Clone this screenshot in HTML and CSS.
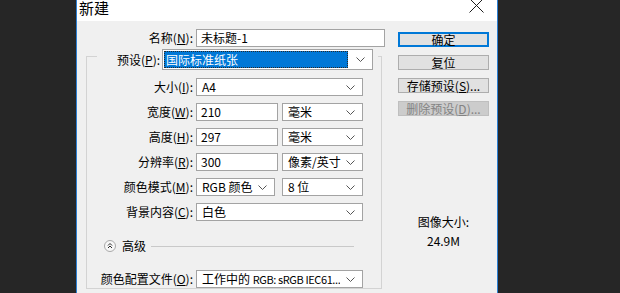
FILE: index.html
```html
<!DOCTYPE html>
<html lang="zh-CN">
<head>
  <meta charset="UTF-8" />
  <title>新建</title>
  <link rel="stylesheet" href="styles.css">
</head>
<body>

  <div class="dialog">

    <div class="titlebar">
      <span class="title">新建</span>
      <svg class="close" width="15" height="15" viewBox="0 0 15 15">
        <path d="M0.5 0.5 L14.5 14.5 M14.5 0.5 L0.5 14.5" stroke="#1e1e1e" stroke-width="1" fill="none"/>
      </svg>
    </div>

    <div class="dialog-body">

      <div class="form">
        <div class="row name-row">
          <label class="label">名称(<u>N</u>):</label>
          <div class="field name-field">未标题-1</div>
        </div>

        <fieldset class="group">
          <legend class="preset">
            <label class="label">预设(<u>P</u>):</label>
            <div class="field select preset-select">
              <span class="selected">国际标准纸张</span>
              <svg class="chev" width="9" height="5" viewBox="0 0 9 5"><path d="M0.5 0.5 L4.5 4.5 L8.5 0.5" fill="none" stroke="#555"/></svg>
            </div>
          </legend>

          <div class="rows">
            <div class="row">
              <label class="label">大小(<u>I</u>):</label>
              <div class="field select wide">
                <span>A4</span>
                <svg class="chev" width="9" height="5" viewBox="0 0 9 5"><path d="M0.5 0.5 L4.5 4.5 L8.5 0.5" fill="none" stroke="#555"/></svg>
              </div>
            </div>

            <div class="row">
              <label class="label">宽度(<u>W</u>):</label>
              <div class="field num">210</div>
              <div class="field select unit">
                <span>毫米</span>
                <svg class="chev" width="9" height="5" viewBox="0 0 9 5"><path d="M0.5 0.5 L4.5 4.5 L8.5 0.5" fill="none" stroke="#555"/></svg>
              </div>
            </div>

            <div class="row">
              <label class="label">高度(<u>H</u>):</label>
              <div class="field num">297</div>
              <div class="field select unit">
                <span>毫米</span>
                <svg class="chev" width="9" height="5" viewBox="0 0 9 5"><path d="M0.5 0.5 L4.5 4.5 L8.5 0.5" fill="none" stroke="#555"/></svg>
              </div>
            </div>

            <div class="row">
              <label class="label">分辨率(<u>R</u>):</label>
              <div class="field num">300</div>
              <div class="field select unit">
                <span>像素/英寸</span>
                <svg class="chev" width="9" height="5" viewBox="0 0 9 5"><path d="M0.5 0.5 L4.5 4.5 L8.5 0.5" fill="none" stroke="#555"/></svg>
              </div>
            </div>

            <div class="row">
              <label class="label">颜色模式(<u>M</u>):</label>
              <div class="field select mode">
                <span>RGB 颜色</span>
                <svg class="chev" width="9" height="5" viewBox="0 0 9 5"><path d="M0.5 0.5 L4.5 4.5 L8.5 0.5" fill="none" stroke="#555"/></svg>
              </div>
              <div class="field select unit bits">
                <span>8 位</span>
                <svg class="chev" width="9" height="5" viewBox="0 0 9 5"><path d="M0.5 0.5 L4.5 4.5 L8.5 0.5" fill="none" stroke="#555"/></svg>
              </div>
            </div>

            <div class="row">
              <label class="label">背景内容(<u>C</u>):</label>
              <div class="field select wide">
                <span>白色</span>
                <svg class="chev" width="9" height="5" viewBox="0 0 9 5"><path d="M0.5 0.5 L4.5 4.5 L8.5 0.5" fill="none" stroke="#555"/></svg>
              </div>
            </div>

            <div class="advanced">
              <svg class="adv-icon" width="12" height="12" viewBox="0 0 12 12">
                <circle cx="6" cy="6" r="5.5" fill="#f7f7f7" stroke="#a9a9a9"/>
                <path d="M4 5.5 L6 3.5 L8 5.5 M4 8 L6 6 L8 8" fill="none" stroke="#2a2a2a"/>
              </svg>
              <span class="adv-text">高级</span>
              <div class="adv-line"></div>
            </div>

            <div class="row profile-row">
              <label class="label">颜色配置文件(<u>O</u>):</label>
              <div class="field select wide">
                <span class="clip">工作中的 <span class="latin">RGB: sRGB IEC61...</span></span>
                <svg class="chev" width="9" height="5" viewBox="0 0 9 5"><path d="M0.5 0.5 L4.5 4.5 L8.5 0.5" fill="none" stroke="#555"/></svg>
              </div>
            </div>
          </div>
        </fieldset>
      </div>

      <div class="side">
        <div class="btn btn-default">确定</div>
        <div class="btn">复位</div>
        <div class="btn">存储预设(<u>S</u>)...</div>
        <div class="btn btn-disabled">删除预设(<u>D</u>)...</div>

        <div class="info">
          <div>图像大小:</div>
          <div>24.9M</div>
        </div>
      </div>

    </div>
  </div>

</body>
</html>
```

FILE: styles.css
```css
html, body {
  margin: 0;
  padding: 0;
  width: 100%;
  height: 100%;
  background: #262626;
  overflow: hidden;
  font-family: "Noto Sans CJK SC", "Noto Sans", sans-serif;
  font-size: 12px;
  color: #000;
}

.dialog {
  width: 420px;
  height: 100%;
  margin-left: 76px;
  border-left: 1px solid #2b7fd3;
  border-right: 1px solid #2b7fd3;
  background: #f0f0f0;
}

.titlebar {
  height: 21px;
  background: #fff;
  display: flex;
  justify-content: space-between;
  align-items: flex-start;
  padding: 0 13px 0 2px;
}
.title {
  font-size: 15px;
  line-height: 16px;
}
.close {
  margin-top: -2px;
}

.dialog-body {
  display: flex;
  padding-top: 8px;
}

.form {
  width: 308px;
}

.row {
  display: flex;
  align-items: center;
}

.label {
  width: 106px;
  margin-right: 3px;
  text-align: right;
  white-space: nowrap;
  line-height: 18px;
}
.name-row .label {
  width: 116px;
}

.field {
  box-sizing: border-box;
  height: 18px;
  border: 1px solid #a3a3a3;
  background: #fff;
  padding: 0 4px;
  line-height: 16px;
  white-space: nowrap;
  overflow: hidden;
}
.select {
  display: flex;
  align-items: center;
  justify-content: space-between;
  padding: 0 7px 0 5px;
}
.chev {
  flex-shrink: 0;
}
.clip {
  overflow: hidden;
}
.latin {
  font-size: 11px;
  letter-spacing: -0.4px;
}

.name-field {
  width: 189px;
}
.wide {
  width: 167px;
}
.num {
  width: 82px;
}
.unit {
  width: 81px;
  margin-left: 4px;
}
.mode {
  width: 79px;
}
.bits {
  margin-left: 7px;
}

.group {
  box-sizing: border-box;
  width: 296px;
  min-width: 0;
  margin: -4px 0 0 9px;
  padding: 0;
  border: 1px solid #d3d3d3;
}

.preset {
  display: flex;
  align-items: center;
  margin-left: 10px;
  padding: 6px 5px 0 20px;
}
.preset .label {
  width: auto;
  margin-right: 2px;
}
.preset-select {
  width: 211px;
  height: 21px;
  padding: 1px 7px 1px 1px;
}
.selected {
  box-sizing: border-box;
  width: 184px;
  height: 100%;
  padding-left: 2px;
  background: #0078d7;
  color: #fff;
  line-height: 17px;
  outline: 1px dotted #2a2a2a;
  outline-offset: -1px;
}

.rows {
  display: flex;
  flex-direction: column;
  gap: 7px;
  padding-top: 8px;
}

.advanced {
  display: flex;
  align-items: center;
  margin: 12px 27px 0 17px;
  height: 12px;
}
.adv-icon {
  margin-right: 6px;
}
.adv-text {
  line-height: 12px;
}
.adv-line {
  flex: 1;
  height: 1px;
  margin-left: 5px;
  background: #c9c9c9;
}

.profile-row {
  margin-top: 11px;
}

.side {
  width: 91px;
  margin-left: 13px;
  padding-top: 3px;
  display: flex;
  flex-direction: column;
  gap: 8px;
}

.btn {
  box-sizing: border-box;
  height: 15px;
  border: 1px solid #adadad;
  background: #e1e1e1;
  text-align: center;
  line-height: 13px;
  white-space: nowrap;
}
.btn-default {
  border-color: #0078d7;
  box-shadow: inset 0 0 0 1px #0078d7;
}
.btn-disabled {
  background: #cccccc;
  border-color: #bfbfbf;
  color: #838383;
}

.info {
  margin-top: 88px;
  text-align: center;
  line-height: 19px;
}
```
